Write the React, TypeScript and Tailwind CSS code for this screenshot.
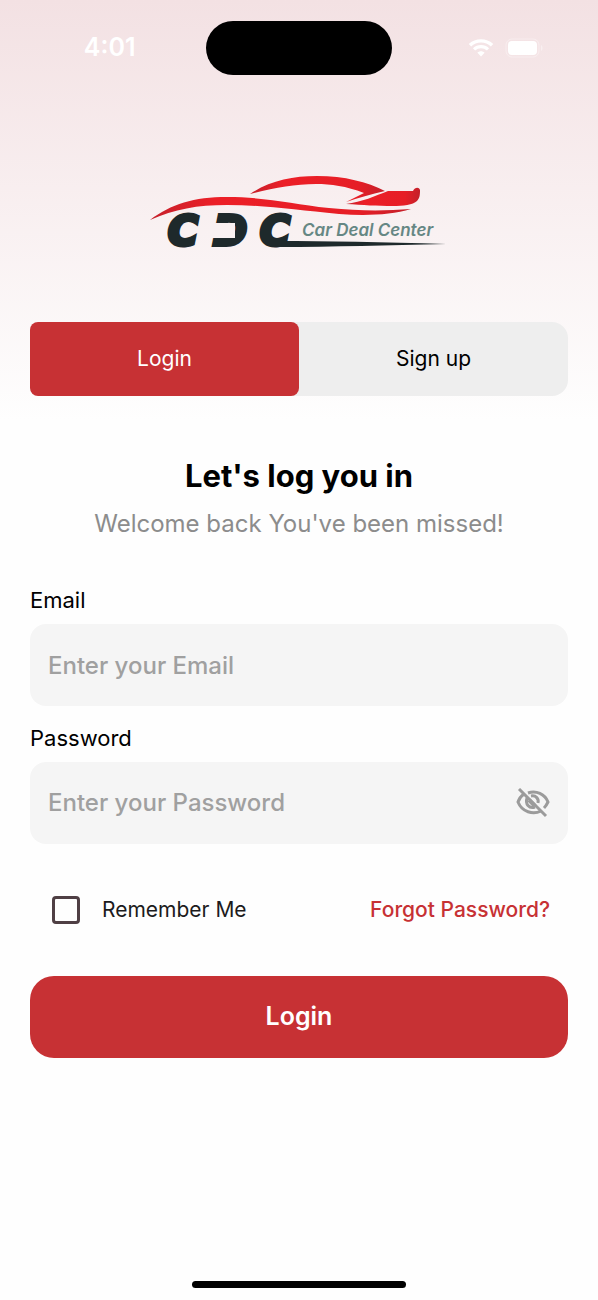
import { useState } from "react";

function StatusBar() {
  return (
    <header className="grid h-24 grid-cols-3 items-center font-semibold text-white">
      <span className="pl-5 text-center text-[25px]">4:01</span>
      <div className="mx-auto h-[54px] w-[186px] rounded-full bg-black" />
      <div className="flex items-center justify-center gap-3 pl-4">
        <svg viewBox="0 0 24 18" className="h-[18px] w-6" fill="none" stroke="currentColor">
          <path d="M1 6.2C7 .4 17 .4 23 6.2" strokeWidth="3.4" />
          <path d="M5 10.4c4-3.8 10-3.8 14 0" strokeWidth="3.2" />
          <path d="M8.4 13.8c2-2 5.2-2 7.2 0L12 17.6z" fill="currentColor" stroke="none" />
        </svg>
        <svg viewBox="0 0 38 20" className="h-5 w-[38px]">
          <rect x="1" y="1" width="33" height="18" rx="6" fill="none" stroke="#fff" strokeOpacity=".35" />
          <rect x="3" y="3" width="29" height="14" rx="4" fill="#fff" />
          <path d="M36 7c2 1 2 5 0 6z" fill="#fff" fillOpacity=".4" />
        </svg>
      </div>
    </header>
  );
}

function Logo() {
  return (
    <svg viewBox="0 0 300 96" className="mx-auto h-24 w-[300px]" role="img" aria-label="Car Deal Center">
      <defs>
        <linearGradient id="body" x1="0" x2="1">
          <stop offset="0" stopColor="#c5202b" />
          <stop offset=".25" stopColor="#ec1f27" />
          <stop offset=".8" stopColor="#e61e26" />
          <stop offset="1" stopColor="#c3202a" />
        </linearGradient>
        {/* opens the D on its left side */}
        <clipPath id="openD">
          <path d="M50 20H120V96H50V68H86V53H50z" />
        </clipPath>
      </defs>
      <g fill="url(#body)">
        <path d="M1 50C22 34 45 27 78 27c38 0 65 7 102 11 30 3 55 3 82 1-20 6-45 7-72 5-44-4-76-9-112-9-30 0-52 4-77 15z" />
        <path d="M101 24C120 11 143 6 168 6c28 0 50 6 68 15-14 3-27 7-39 11l18-9c-18-7-33-9-48-9-22 0-42 4-66 10z" />
        <path d="M197 34c16-2 29-8 42-13h25c2-4 6-4 7-1 0 4 0 8-3 11-4 4-14 5-24 5-16 0-30-1-47-2z" />
      </g>
      <g
        fill="#1e292b"
        stroke="#1e292b"
        strokeWidth="4"
        className="font-['DejaVu_Sans'] text-[41px] font-bold italic"
      >
        <text x="19" y="75">C</text>
        <text x="64" y="75" clipPath="url(#openD)">D</text>
        <text x="111" y="75">C</text>
      </g>
      <path d="M128 71c50 0 105 1 169 3-60 1-110 3-169 3z" fill="#1e292b" />
      <text x="153" y="66" fill="#668784" className="font-['Inter'] text-[17px] font-semibold italic">
        Car Deal Center
      </text>
    </svg>
  );
}

function EyeOff() {
  return (
    <svg viewBox="0 0 34 30" className="h-[30px] w-[34px]" fill="none" stroke="currentColor" strokeWidth="3">
      <path d="M12 5c8-3 17 1 20 9-1 2-2 4-4 6" />
      <path d="M8 6c-3 2-5 5-6 8 4 10 15 13 23 9" />
      <path d="M15 8c5-1 8 3 7 7M11 10c-2 6 2 11 8 9" />
      <path d="M13 12l6 6" strokeWidth="4" />
      <path d="M3 1l27 27" />
    </svg>
  );
}

export default function App() {
  const [tab, setTab] = useState("login");
  const [showPassword, setShowPassword] = useState(false);

  const active = "rounded-lg bg-[#c73134] text-white";

  return (
    <div className="flex min-h-screen flex-col bg-[#fefefe] bg-[linear-gradient(#f3e1e3,#fefefe_420px)] font-['Inter',sans-serif] text-black">
      <StatusBar />

      <main className="flex flex-col px-[30px] pt-[74px]">
        <Logo />

        <div className="mt-14 grid h-[74px] grid-cols-2 rounded-2xl bg-[#eeeeee] text-[21px]">
          <button type="button" onClick={() => setTab("login")} className={tab === "login" ? active : ""}>
            Login
          </button>
          <button type="button" onClick={() => setTab("signup")} className={tab === "signup" ? active : ""}>
            Sign up
          </button>
        </div>

        <h1 className="mt-[60px] text-center text-[31px] leading-10 font-bold">Let's log you in</h1>
        <p className="mt-3 text-center text-2xl leading-8 text-[#8c8c8c]">
          Welcome back You've been missed!
        </p>

        <form className="mt-11 flex flex-col" onSubmit={(e) => e.preventDefault()}>
          <label htmlFor="email" className="text-[22px] leading-8">
            Email
          </label>
          <input
            id="email"
            type="email"
            placeholder="Enter your Email"
            className="mt-2 h-[82px] w-full rounded-2xl bg-[#f5f5f5] px-[18px] text-2xl font-medium outline-none placeholder:text-[#a0a0a0]"
          />

          <label htmlFor="password" className="mt-4 text-[22px] leading-8">
            Password
          </label>
          <div className="mt-2 flex h-[82px] items-center rounded-2xl bg-[#f5f5f5] px-[18px]">
            <input
              id="password"
              type={showPassword ? "text" : "password"}
              placeholder="Enter your Password"
              className="min-w-0 flex-1 bg-transparent text-2xl font-medium outline-none placeholder:text-[#a0a0a0]"
            />
            <button
              type="button"
              aria-label="Show password"
              onClick={() => setShowPassword(!showPassword)}
              className="text-[#9b9b9b]"
            >
              <EyeOff />
            </button>
          </div>

          <div className="mt-12 flex items-center justify-between px-[18px] text-[21px] leading-9">
            <label className="flex items-center gap-[22px] pl-1 text-[#1c1b1c]">
              <input
                type="checkbox"
                className="size-7 appearance-none rounded-sm border-3 border-[#4f3f44] checked:bg-[#c73134]"
              />
              Remember Me
            </label>
            <a href="#" className="font-medium text-[#c73134]">
              Forgot Password?
            </a>
          </div>

          <button
            type="submit"
            className="mt-12 h-[82px] rounded-3xl bg-[#c73134] text-[25px] font-semibold text-white"
          >
            Login
          </button>
        </form>
      </main>

      <div className="mx-auto mt-auto mb-3 h-[7px] w-[214px] rounded-full bg-black" />
    </div>
  );
}
